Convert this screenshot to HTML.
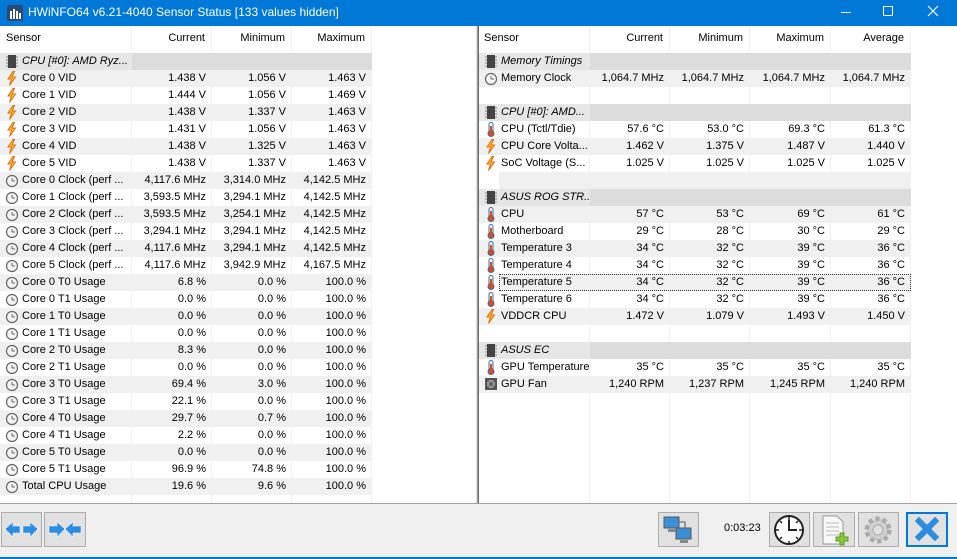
<!DOCTYPE html>
<html><head><meta charset="utf-8">
<style>
*{margin:0;padding:0;box-sizing:border-box}
body{width:957px;height:559px;overflow:hidden;background:#f0f0f0;font-family:"Liberation Sans",Tahoma,sans-serif;font-size:11px;color:#000;position:relative}
#title{position:absolute;left:0;top:0;width:957px;height:26px;background:#0078d7;color:#fff;font-size:12px}
#title .t{position:absolute;left:28px;top:5px}
.pane{position:absolute;top:26px;height:478px;background:#fff;overflow:hidden}
.vl{position:absolute;top:0;bottom:0;width:1px;background:#f0f0f0}
.row{position:absolute;left:0;height:17px;display:flex;white-space:nowrap}
.row div{height:17px;line-height:17px;overflow:hidden}
.c0{padding-left:22px;position:relative}
.n{text-align:right;padding-right:6px}
.g{background:#f0f0f0}
.grp{background:#dcdcdc}
.grp .c0{font-style:italic}
.hd{position:absolute;left:0;top:0;height:25px;display:flex}
.hd div{line-height:25px;height:25px;border-right:1px solid #f0f0f0}
.ic{position:absolute;left:5px;top:1px;width:14px;height:15px}
.btn{position:absolute;top:512px;height:35px;background:#e1e1e1;border:1px solid #adadad}
</style></head><body>
<div id="title">
<svg style="position:absolute;left:7px;top:5px" width="16" height="16"><rect x="0" y="0" width="16" height="16" rx="2" fill="#2b4a74"/><rect x="3" y="6" width="2" height="8" fill="#fff"/><rect x="6" y="4" width="2" height="10" fill="#fff"/><rect x="9" y="6" width="2" height="8" fill="#fff"/><rect x="12" y="8" width="2" height="6" fill="#fff"/></svg>
<span class="t">HWiNFO64 v6.21-4040 Sensor Status [133 values hidden]</span>
<div style="position:absolute;left:841px;top:12px;width:10px;height:1px;background:#fff"></div>
<div style="position:absolute;left:883px;top:6px;width:10px;height:10px;border:1px solid #fff"></div>
<svg style="position:absolute;left:927px;top:5px" width="12" height="12"><path d="M1 1L11 11M11 1L1 11" stroke="#fff" stroke-width="1.2"/></svg>
</div>

<svg width="0" height="0" style="position:absolute">
<defs>
<symbol id="bolt" viewBox="0 0 14 15"><path d="M8 0.5L3 8h3.5l-2 6.5 6-8.5H7l2.5-5.5z" fill="#f8c020" stroke="#e06a10" stroke-width="1"/></symbol>
<symbol id="clk" viewBox="0 0 14 15"><circle cx="7" cy="8" r="5.5" fill="#f4f4f4" stroke="#666" stroke-width="1.2"/><path d="M7 8H10M7 8V5" stroke="#666" stroke-width="1"/></symbol>
<symbol id="chip" viewBox="0 0 14 15"><rect x="3" y="1" width="8" height="13" fill="#444"/><path d="M1 3h2M1 6h2M1 9h2M1 12h2M11 3h2M11 6h2M11 9h2M11 12h2" stroke="#888"/></symbol>
<symbol id="th" viewBox="0 0 14 15"><rect x="5" y="0.5" width="4" height="10" rx="2" fill="#fff" stroke="#3a6ea5"/><circle cx="7" cy="11.5" r="3" fill="#e04a1a" stroke="#3a6ea5"/><rect x="6" y="4" width="2" height="7" fill="#e04a1a"/></symbol>
<symbol id="fan" viewBox="0 0 14 15"><rect x="1" y="1" width="12" height="12" fill="#555"/><circle cx="7" cy="7" r="4" fill="#ccc"/><path d="M7 3V11M3 7H11M4 4L10 10M10 4L4 10" stroke="#555"/></symbol>
</defs></svg>

<!-- LEFT PANE -->
<div class="pane" style="left:0;width:476px">
<div class="vl" style="left:131px"></div><div class="vl" style="left:211px"></div><div class="vl" style="left:291px"></div><div class="vl" style="left:371px"></div>
<div class="hd"><div style="width:132px;padding-left:6px">Sensor</div><div style="width:80px;text-align:right;padding-right:6px">Current</div><div style="width:80px;text-align:right;padding-right:6px">Minimum</div><div style="width:80px;text-align:right;padding-right:6px">Maximum</div></div>
</div>
<div style="position:absolute;left:476px;top:26px;width:3px;height:478px;background:#a0a0a0;border-left:1px solid #ddd;border-right:1px solid #696969"></div>

<!-- RIGHT PANE -->
<div class="pane" style="left:479px;width:476px">
<div class="vl" style="left:110px"></div><div class="vl" style="left:190px"></div><div class="vl" style="left:270px"></div><div class="vl" style="left:351px"></div><div class="vl" style="left:431px"></div>
<div class="hd"><div style="width:111px;padding-left:5px">Sensor</div><div style="width:80px;text-align:right;padding-right:6px">Current</div><div style="width:80px;text-align:right;padding-right:6px">Minimum</div><div style="width:81px;text-align:right;padding-right:6px">Maximum</div><div style="width:80px;text-align:right;padding-right:6px">Average</div></div>
</div>
<div style="position:absolute;left:955px;top:26px;width:2px;height:478px;background:#fff"></div>
<div style="position:absolute;left:0;top:503px;width:957px;height:1px;background:#a0a0a0"></div>

<!-- left rows -->
<div style="position:absolute;left:0;top:53px">
<div class="row grp" style="top:0"><div class="c0" style="width:132px;background:#e6e6e6"><svg class="ic"><use href="#chip"/></svg>CPU [#0]: AMD Ryz...</div><div style="width:240px"></div></div>
<div class="row g" style="top:17px"><div class="c0" style="width:132px"><svg class="ic"><use href="#bolt"/></svg>Core 0 VID</div><div class="n" style="width:80px">1.438 V</div><div class="n" style="width:80px">1.056 V</div><div class="n" style="width:80px">1.463 V</div></div>
<div class="row" style="top:34px"><div class="c0" style="width:132px"><svg class="ic"><use href="#bolt"/></svg>Core 1 VID</div><div class="n" style="width:80px">1.444 V</div><div class="n" style="width:80px">1.056 V</div><div class="n" style="width:80px">1.469 V</div></div>
<div class="row g" style="top:51px"><div class="c0" style="width:132px"><svg class="ic"><use href="#bolt"/></svg>Core 2 VID</div><div class="n" style="width:80px">1.438 V</div><div class="n" style="width:80px">1.337 V</div><div class="n" style="width:80px">1.463 V</div></div>
<div class="row" style="top:68px"><div class="c0" style="width:132px"><svg class="ic"><use href="#bolt"/></svg>Core 3 VID</div><div class="n" style="width:80px">1.431 V</div><div class="n" style="width:80px">1.056 V</div><div class="n" style="width:80px">1.463 V</div></div>
<div class="row g" style="top:85px"><div class="c0" style="width:132px"><svg class="ic"><use href="#bolt"/></svg>Core 4 VID</div><div class="n" style="width:80px">1.438 V</div><div class="n" style="width:80px">1.325 V</div><div class="n" style="width:80px">1.463 V</div></div>
<div class="row" style="top:102px"><div class="c0" style="width:132px"><svg class="ic"><use href="#bolt"/></svg>Core 5 VID</div><div class="n" style="width:80px">1.438 V</div><div class="n" style="width:80px">1.337 V</div><div class="n" style="width:80px">1.463 V</div></div>
<div class="row g" style="top:119px"><div class="c0" style="width:132px"><svg class="ic"><use href="#clk"/></svg>Core 0 Clock (perf ...</div><div class="n" style="width:80px">4,117.6 MHz</div><div class="n" style="width:80px">3,314.0 MHz</div><div class="n" style="width:80px">4,142.5 MHz</div></div>
<div class="row" style="top:136px"><div class="c0" style="width:132px"><svg class="ic"><use href="#clk"/></svg>Core 1 Clock (perf ...</div><div class="n" style="width:80px">3,593.5 MHz</div><div class="n" style="width:80px">3,294.1 MHz</div><div class="n" style="width:80px">4,142.5 MHz</div></div>
<div class="row g" style="top:153px"><div class="c0" style="width:132px"><svg class="ic"><use href="#clk"/></svg>Core 2 Clock (perf ...</div><div class="n" style="width:80px">3,593.5 MHz</div><div class="n" style="width:80px">3,254.1 MHz</div><div class="n" style="width:80px">4,142.5 MHz</div></div>
<div class="row" style="top:170px"><div class="c0" style="width:132px"><svg class="ic"><use href="#clk"/></svg>Core 3 Clock (perf ...</div><div class="n" style="width:80px">3,294.1 MHz</div><div class="n" style="width:80px">3,294.1 MHz</div><div class="n" style="width:80px">4,142.5 MHz</div></div>
<div class="row g" style="top:187px"><div class="c0" style="width:132px"><svg class="ic"><use href="#clk"/></svg>Core 4 Clock (perf ...</div><div class="n" style="width:80px">4,117.6 MHz</div><div class="n" style="width:80px">3,294.1 MHz</div><div class="n" style="width:80px">4,142.5 MHz</div></div>
<div class="row" style="top:204px"><div class="c0" style="width:132px"><svg class="ic"><use href="#clk"/></svg>Core 5 Clock (perf ...</div><div class="n" style="width:80px">4,117.6 MHz</div><div class="n" style="width:80px">3,942.9 MHz</div><div class="n" style="width:80px">4,167.5 MHz</div></div>
<div class="row g" style="top:221px"><div class="c0" style="width:132px"><svg class="ic"><use href="#clk"/></svg>Core 0 T0 Usage</div><div class="n" style="width:80px">6.8 %</div><div class="n" style="width:80px">0.0 %</div><div class="n" style="width:80px">100.0 %</div></div>
<div class="row" style="top:238px"><div class="c0" style="width:132px"><svg class="ic"><use href="#clk"/></svg>Core 0 T1 Usage</div><div class="n" style="width:80px">0.0 %</div><div class="n" style="width:80px">0.0 %</div><div class="n" style="width:80px">100.0 %</div></div>
<div class="row g" style="top:255px"><div class="c0" style="width:132px"><svg class="ic"><use href="#clk"/></svg>Core 1 T0 Usage</div><div class="n" style="width:80px">0.0 %</div><div class="n" style="width:80px">0.0 %</div><div class="n" style="width:80px">100.0 %</div></div>
<div class="row" style="top:272px"><div class="c0" style="width:132px"><svg class="ic"><use href="#clk"/></svg>Core 1 T1 Usage</div><div class="n" style="width:80px">0.0 %</div><div class="n" style="width:80px">0.0 %</div><div class="n" style="width:80px">100.0 %</div></div>
<div class="row g" style="top:289px"><div class="c0" style="width:132px"><svg class="ic"><use href="#clk"/></svg>Core 2 T0 Usage</div><div class="n" style="width:80px">8.3 %</div><div class="n" style="width:80px">0.0 %</div><div class="n" style="width:80px">100.0 %</div></div>
<div class="row" style="top:306px"><div class="c0" style="width:132px"><svg class="ic"><use href="#clk"/></svg>Core 2 T1 Usage</div><div class="n" style="width:80px">0.0 %</div><div class="n" style="width:80px">0.0 %</div><div class="n" style="width:80px">100.0 %</div></div>
<div class="row g" style="top:323px"><div class="c0" style="width:132px"><svg class="ic"><use href="#clk"/></svg>Core 3 T0 Usage</div><div class="n" style="width:80px">69.4 %</div><div class="n" style="width:80px">3.0 %</div><div class="n" style="width:80px">100.0 %</div></div>
<div class="row" style="top:340px"><div class="c0" style="width:132px"><svg class="ic"><use href="#clk"/></svg>Core 3 T1 Usage</div><div class="n" style="width:80px">22.1 %</div><div class="n" style="width:80px">0.0 %</div><div class="n" style="width:80px">100.0 %</div></div>
<div class="row g" style="top:357px"><div class="c0" style="width:132px"><svg class="ic"><use href="#clk"/></svg>Core 4 T0 Usage</div><div class="n" style="width:80px">29.7 %</div><div class="n" style="width:80px">0.7 %</div><div class="n" style="width:80px">100.0 %</div></div>
<div class="row" style="top:374px"><div class="c0" style="width:132px"><svg class="ic"><use href="#clk"/></svg>Core 4 T1 Usage</div><div class="n" style="width:80px">2.2 %</div><div class="n" style="width:80px">0.0 %</div><div class="n" style="width:80px">100.0 %</div></div>
<div class="row g" style="top:391px"><div class="c0" style="width:132px"><svg class="ic"><use href="#clk"/></svg>Core 5 T0 Usage</div><div class="n" style="width:80px">0.0 %</div><div class="n" style="width:80px">0.0 %</div><div class="n" style="width:80px">100.0 %</div></div>
<div class="row" style="top:408px"><div class="c0" style="width:132px"><svg class="ic"><use href="#clk"/></svg>Core 5 T1 Usage</div><div class="n" style="width:80px">96.9 %</div><div class="n" style="width:80px">74.8 %</div><div class="n" style="width:80px">100.0 %</div></div>
<div class="row g" style="top:425px"><div class="c0" style="width:132px"><svg class="ic"><use href="#clk"/></svg>Total CPU Usage</div><div class="n" style="width:80px">19.6 %</div><div class="n" style="width:80px">9.6 %</div><div class="n" style="width:80px">100.0 %</div></div>
</div>

<!-- right rows -->
<div style="position:absolute;left:479px;top:53px">
<div class="row grp" style="top:0"><div class="c0" style="width:111px;background:#e6e6e6"><svg class="ic"><use href="#chip"/></svg>Memory Timings</div><div style="width:321px"></div></div>
<div class="row g" style="top:17px"><div class="c0" style="width:111px"><svg class="ic"><use href="#clk"/></svg>Memory Clock</div><div class="n" style="width:80px">1,064.7 MHz</div><div class="n" style="width:80px">1,064.7 MHz</div><div class="n" style="width:81px">1,064.7 MHz</div><div class="n" style="width:80px">1,064.7 MHz</div></div>
<div class="row grp" style="top:51px"><div class="c0" style="width:111px;background:#e6e6e6"><svg class="ic"><use href="#chip"/></svg>CPU [#0]: AMD...</div><div style="width:321px"></div></div>
<div class="row" style="top:68px"><div class="c0" style="width:111px"><svg class="ic"><use href="#th"/></svg>CPU (Tctl/Tdie)</div><div class="n" style="width:80px">57.6 °C</div><div class="n" style="width:80px">53.0 °C</div><div class="n" style="width:81px">69.3 °C</div><div class="n" style="width:80px">61.3 °C</div></div>
<div class="row g" style="top:85px"><div class="c0" style="width:111px"><svg class="ic"><use href="#bolt"/></svg>CPU Core Volta...</div><div class="n" style="width:80px">1.462 V</div><div class="n" style="width:80px">1.375 V</div><div class="n" style="width:81px">1.487 V</div><div class="n" style="width:80px">1.440 V</div></div>
<div class="row" style="top:102px"><div class="c0" style="width:111px"><svg class="ic"><use href="#bolt"/></svg>SoC Voltage (S...</div><div class="n" style="width:80px">1.025 V</div><div class="n" style="width:80px">1.025 V</div><div class="n" style="width:81px">1.025 V</div><div class="n" style="width:80px">1.025 V</div></div>
<div class="row g" style="top:119px;left:20px"><div style="width:412px"></div></div>
<div class="row grp" style="top:136px"><div class="c0" style="width:111px;background:#e6e6e6"><svg class="ic"><use href="#chip"/></svg>ASUS ROG STR...</div><div style="width:321px"></div></div>
<div class="row g" style="top:153px"><div class="c0" style="width:111px"><svg class="ic"><use href="#th"/></svg>CPU</div><div class="n" style="width:80px">57 °C</div><div class="n" style="width:80px">53 °C</div><div class="n" style="width:81px">69 °C</div><div class="n" style="width:80px">61 °C</div></div>
<div class="row" style="top:170px"><div class="c0" style="width:111px"><svg class="ic"><use href="#th"/></svg>Motherboard</div><div class="n" style="width:80px">29 °C</div><div class="n" style="width:80px">28 °C</div><div class="n" style="width:81px">30 °C</div><div class="n" style="width:80px">29 °C</div></div>
<div class="row g" style="top:187px"><div class="c0" style="width:111px"><svg class="ic"><use href="#th"/></svg>Temperature 3</div><div class="n" style="width:80px">34 °C</div><div class="n" style="width:80px">32 °C</div><div class="n" style="width:81px">39 °C</div><div class="n" style="width:80px">36 °C</div></div>
<div class="row" style="top:204px"><div class="c0" style="width:111px"><svg class="ic"><use href="#th"/></svg>Temperature 4</div><div class="n" style="width:80px">34 °C</div><div class="n" style="width:80px">32 °C</div><div class="n" style="width:81px">39 °C</div><div class="n" style="width:80px">36 °C</div></div>
<div class="row g" style="top:221px;outline:1px dotted #333;outline-offset:-1px;left:20px"><div style="width:91px;padding-left:2px">Temperature 5</div><div class="n" style="width:80px">34 °C</div><div class="n" style="width:80px">32 °C</div><div class="n" style="width:81px">39 °C</div><div class="n" style="width:80px">36 °C</div></div>
<svg class="ic" style="position:absolute;left:5px;top:222px"><use href="#th"/></svg>
<div class="row" style="top:238px"><div class="c0" style="width:111px"><svg class="ic"><use href="#th"/></svg>Temperature 6</div><div class="n" style="width:80px">34 °C</div><div class="n" style="width:80px">32 °C</div><div class="n" style="width:81px">39 °C</div><div class="n" style="width:80px">36 °C</div></div>
<div class="row g" style="top:255px"><div class="c0" style="width:111px"><svg class="ic"><use href="#bolt"/></svg>VDDCR CPU</div><div class="n" style="width:80px">1.472 V</div><div class="n" style="width:80px">1.079 V</div><div class="n" style="width:81px">1.493 V</div><div class="n" style="width:80px">1.450 V</div></div>
<div class="row grp" style="top:289px"><div class="c0" style="width:111px;background:#e6e6e6"><svg class="ic"><use href="#chip"/></svg>ASUS EC</div><div style="width:321px"></div></div>
<div class="row" style="top:306px"><div class="c0" style="width:111px"><svg class="ic"><use href="#th"/></svg>GPU Temperature</div><div class="n" style="width:80px">35 °C</div><div class="n" style="width:80px">35 °C</div><div class="n" style="width:81px">35 °C</div><div class="n" style="width:80px">35 °C</div></div>
<div class="row g" style="top:323px"><div class="c0" style="width:111px"><svg class="ic"><use href="#fan"/></svg>GPU Fan</div><div class="n" style="width:80px">1,240 RPM</div><div class="n" style="width:80px">1,237 RPM</div><div class="n" style="width:81px">1,245 RPM</div><div class="n" style="width:80px">1,240 RPM</div></div>
</div>

<!-- bottom toolbar -->
<div class="btn" style="left:1px;width:41px"><svg width="39" height="33"><path d="M3 16l8-7v4h7v7h-7v4z" fill="#2a8de0" stroke="#fff" stroke-dasharray="1 1"/><path d="M36 16l-8-7v4h-7v7h7v4z" fill="#2a8de0" stroke="#fff" stroke-dasharray="1 1"/></svg></div>
<div class="btn" style="left:44px;width:42px"><svg width="40" height="33"><path d="M20 16l-8-7v4H4v7h8v4z" fill="#2a8de0" stroke="#fff" stroke-dasharray="1 1"/><path d="M20 16l8-7v4h8v7h-8v4z" fill="#2a8de0" stroke="#fff" stroke-dasharray="1 1"/></svg></div>
<div class="btn" style="left:658px;width:41px"><svg width="39" height="33"><rect x="5" y="4" width="15" height="11" fill="#3a8fd8" stroke="#555"/><rect x="17" y="15" width="15" height="11" fill="#3a8fd8" stroke="#555"/><rect x="9" y="16" width="8" height="3" fill="#888"/><rect x="21" y="27" width="8" height="3" fill="#888"/><path d="M20 9h6v6" stroke="#555" fill="none"/></svg></div>
<div style="position:absolute;left:724px;top:522px">0:03:23</div>
<div class="btn" style="left:769px;width:41px"><svg width="39" height="33"><circle cx="19" cy="17" r="14" fill="#fff" stroke="#222" stroke-width="2"/><path d="M19 7V17H27" stroke="#222" stroke-width="2" fill="none"/><path d="M19 4v3M19 28v3M6 17h3M29 17h3M10 8l2 2M28 8l-2 2M10 26l2-2M28 26l-2-2" stroke="#222" stroke-width="1.5"/></svg></div>
<div class="btn" style="left:813px;width:42px"><svg width="40" height="33"><path d="M9 3h14l6 6v22H9z" fill="#f8f8f8" stroke="#999"/><path d="M12 10h13M12 14h13M12 18h13M12 22h13" stroke="#bbb"/><path d="M26 20h4v4h4v4h-4v4h-4v-4h-4v-4h4z" fill="#8cc63e" stroke="#5a9a20"/></svg></div>
<div class="btn" style="left:858px;width:41px"><svg width="39" height="33"><circle cx="19" cy="17" r="11" fill="#c8c8c8" stroke="#aaa" stroke-width="5" stroke-dasharray="4 3"/><circle cx="19" cy="17" r="9" fill="#d0d0d0"/><circle cx="19" cy="17" r="5" fill="#e1e1e1" stroke="#aaa"/></svg></div>
<div class="btn" style="left:906px;width:42px;border:2px solid #0078d7"><svg width="38" height="31"><path d="M11 7L27 23M27 7L11 23" stroke="#2a8de0" stroke-width="6" stroke-linecap="square"/></svg></div>
<div style="position:absolute;left:0;top:557px;width:957px;height:2px;background:#0078d7"></div>
</body></html>
